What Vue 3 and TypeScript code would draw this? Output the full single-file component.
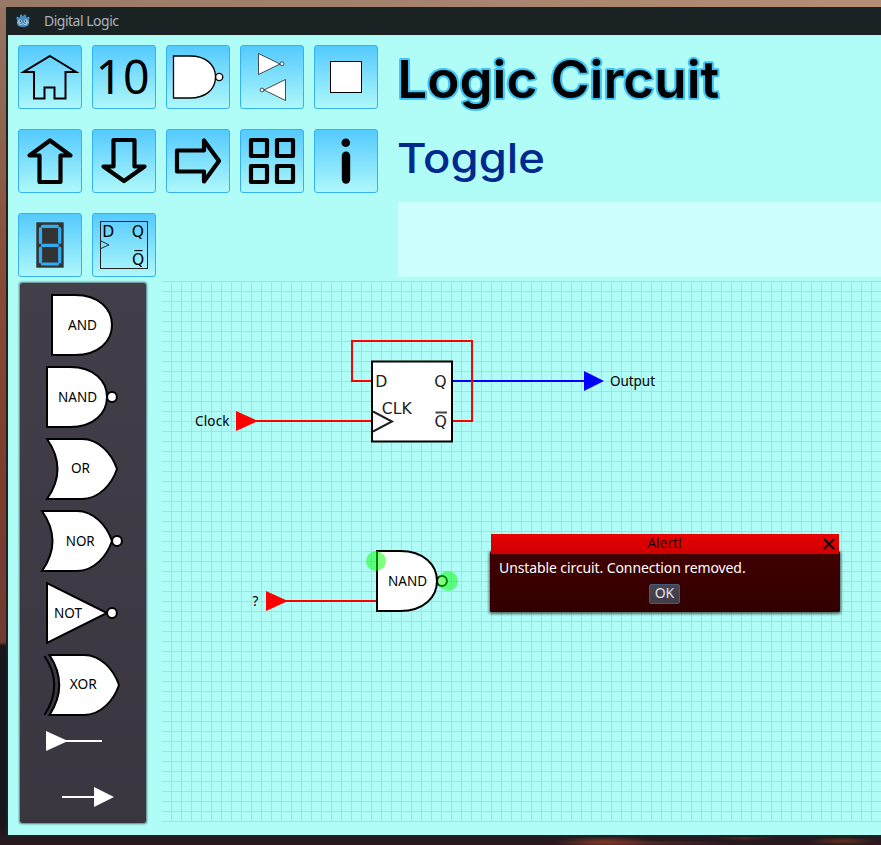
<script setup lang="ts">
import { ref } from 'vue'

interface Gate {
  label: string
  body: string
  textX: number
  textY: number
  textWidth: number
  bubble?: number
  extra?: string
}

const tools: string[] = [
  'home', 'binary', 'gate', 'swap', 'square',
  'up', 'down', 'right', 'grid', 'info',
  'segment', 'flipflop',
]

const gates: Gate[] = [
  { label: 'AND', body: 'M32 6H55C79 6 92 20 92 36S79 66 55 66H32Z', textX: 48, textY: 41, textWidth: 29 },
  { label: 'NAND', body: 'M27 6H50C74 6 87 20 87 36S74 66 50 66H27Z', textX: 38, textY: 41, textWidth: 39, bubble: 92 },
  { label: 'OR', body: 'M27 6H62C79 6 92 21 97 36C92 51 79 66 62 66H27Q48 36 27 6Z', textX: 51, textY: 40, textWidth: 19 },
  { label: 'NOR', body: 'M22 6H57C74 6 87 21 92 36C87 51 74 66 57 66H22Q43 36 22 6Z', textX: 45.7, textY: 41, textWidth: 29, bubble: 97 },
  { label: 'NOT', body: 'M27 6.2L87 36L27 65.800Z', textX: 34, textY: 41, textWidth: 28, bubble: 92 },
  { label: 'XOR', body: 'M29.500 6H64C81 6 94 21 99 36C94 51 81 66 64 66H29.500Q49 36 29.500 6Z', textX: 49.700, textY: 40, textWidth: 27, extra: 'M24.500 7Q44 36 24.500 66' },
]

const alertOpen = ref(true)
</script>

<template>
  <div class="desktop">
    <div class="window">
      <header class="titlebar">
        <svg class="logo" width="16" height="16" viewBox="0 0 16 16">
          <path d="M1 5L2.500 3.500L4 4.500L5 4L5 2L7 1.500L7.500 3H8.500L9 1.500L11 2V4L12 4.500L13.500 3.500L15 5L14 6.500V10.500C14 13 11 14 8 14S2 13 2 10.500V6.500Z" fill="#478cbf" />
          <path d="M2 9.500L4.500 10V11.500H7L7.500 10.500H8.500L9 11.500H11.500V10L14 9.500" fill="none" stroke="#b9d5e8" stroke-width=".8" />
          <circle cx="5" cy="8" r="1.600" fill="#fff" /><circle cx="11" cy="8" r="1.600" fill="#fff" />
          <circle cx="5.200" cy="8" r=".9" fill="#414042" /><circle cx="10.800" cy="8" r=".9" fill="#414042" />
        </svg>
        <span>Digital Logic</span>
      </header>

      <div class="top">
        <nav class="tools">
          <button v-for="tool in tools" :key="tool" class="tool" type="button">
            <svg width="64" height="64" viewBox="0 0 64 64" fill="none" stroke="#000">
              <path v-if="tool === 'home'" d="M32 11L58 27H47.500V53.500H36.500V42.500H26.500V53.500H16V27H5.500Z" stroke-width="2" />
              <text v-else-if="tool === 'binary'" class="glyph" x="3.700" y="48.700" font-size="46.500" textLength="54">10</text>
              <g v-else-if="tool === 'gate'" fill="#fff" stroke-width="1.300">
                <path d="M7.500 11H24C39 11 49.500 19 49.500 32S39 53 24 53H7.500Z" />
                <circle cx="53.200" cy="32" r="3.600" />
              </g>
              <g v-else-if="tool === 'swap'" fill="#fff" stroke="#222" stroke-width=".8">
                <path d="M18.500 8.500L40 19L18.500 29.500Z" /><circle cx="42" cy="18.800" r="1.900" />
                <path d="M45.500 34.500L24 45L45.500 55.500Z" /><circle cx="22" cy="45" r="1.900" />
              </g>
              <rect v-else-if="tool === 'square'" x="16.500" y="16.500" width="31" height="31" fill="#fff" stroke-width="1" />
              <path v-else-if="tool === 'up'" d="M32 11.500L52.500 26.500H42.500V53H21.500V26.500H11.500Z" class="bold" />
              <path v-else-if="tool === 'down'" d="M32 52L52.500 37.500H42.500V11H21.500V37.500H11.500Z" class="bold" />
              <path v-else-if="tool === 'right'" d="M53 32L38 11.500V21.500H11V42.500H38V52.500Z" class="bold" />
              <g v-else-if="tool === 'grid'" class="bold">
                <rect x="11" y="11" width="16" height="16" /><rect x="37" y="11" width="16" height="16" />
                <rect x="11" y="37" width="16" height="16" /><rect x="37" y="37" width="16" height="16" />
              </g>
              <g v-else-if="tool === 'info'" fill="#000" stroke="none">
                <circle cx="31.800" cy="13.800" r="4.300" /><rect x="27.800" y="22.500" width="8.400" height="32.200" rx="4.200" />
              </g>
              <g v-else-if="tool === 'segment'">
                <rect x="18.300" y="9.300" width="27.400" height="45.400" fill="#333" stroke="none" />
                <g stroke="#30adf0" stroke-width="3.200" stroke-linecap="round">
                  <path d="M24.500 13.300H39.500M24.500 32.300H39.500M24.500 51H39.500" />
                  <path d="M22.500 15.500V29.500M41.700 15.500V29.500M22.500 35V49M41.700 35V49" />
                </g>
              </g>
              <g v-else>
                <rect x="8.500" y="8.500" width="47" height="47" stroke="#222" />
                <path d="M9 28L17 31.800L9 35.500" stroke-width=".8" />
                <text class="glyph chip" x="10.300" y="23.700">D</text>
                <text class="glyph chip" x="39.800" y="23.700">Q</text>
                <text class="glyph chip" x="40" y="51.500">Q</text>
                <path d="M42.500 37.600H50.500" stroke-width="1.100" />
              </g>
            </svg>
          </button>
        </nav>

        <div class="heading">
          <svg class="names" width="483" height="167" viewBox="0 0 483 167">
            <text class="title" x="-.8" y="63" font-size="51.500" textLength="322" lengthAdjust="spacingAndGlyphs">Logic Circuit</text>
            <text class="subtitle" x="-1" y="138" font-size="41.500" textLength="148" lengthAdjust="spacingAndGlyphs">Toggle</text>
          </svg>
          <div class="notes"></div>
        </div>
      </div>

      <main class="workspace">
        <aside class="palette">
          <svg v-for="gate in gates" :key="gate.label" width="126" height="72" viewBox="0 0 126 72" fill="#fff" stroke="#000" stroke-width="2">
            <path v-if="gate.extra" :d="gate.extra" fill="none" />
            <path :d="gate.body" />
            <circle v-if="gate.bubble" :cx="gate.bubble" cy="36" r="4.900" />
            <text class="label" :x="gate.textX" :y="gate.textY" :textLength="gate.textWidth" lengthAdjust="spacingAndGlyphs">{{ gate.label }}</text>
          </svg>
          <svg width="126" height="40" viewBox="0 0 126 40" fill="#fff">
            <path d="M26 10L48 20L26 30ZM46 19H82V21H46Z" />
          </svg>
          <svg width="126" height="72" viewBox="0 0 126 72" fill="#fff">
            <path d="M42 35H74V26L94 36L74 46V37H42Z" />
          </svg>
        </aside>

        <section class="canvas">
          <svg class="circuit" width="719" height="542" viewBox="162 281 719 542" fill="none" stroke-width="2">
            <path d="M453 381H586" stroke="#00f" />
            <path d="M584 371L604 381L584 391Z" fill="#00f" />
            <path d="M256 421H372M372 381H352V341H472V421H453" stroke="#f00" />
            <path d="M236 411L258 421L236 431Z" fill="#f00" />
            <rect x="372" y="361.500" width="80" height="80" fill="#fff" stroke="#000" />
            <path d="M373 411.500L392 421.500L373 431.500" stroke="#222" />
            <path d="M435.500 412.500H447" stroke="#444" />
            <text class="pin" x="375.300" y="387.300">D</text>
            <text class="pin" x="434.300" y="387.300">Q</text>
            <text class="pin" x="434.500" y="427.300">Q</text>
            <text class="pin" x="381.700" y="414.200">CLK</text>
            <text class="label" x="195" y="426" textLength="34.500">Clock</text>
            <text class="label" x="610" y="386" textLength="45">Output</text>

            <path d="M286 601H377" stroke="#f00" />
            <path d="M266 591L288 601L266 611Z" fill="#f00" />
            <path d="M377 551H400C424 551 437 565 437 581S424 611 400 611H377Z" fill="#fff" stroke="#000" />
            <circle cx="442" cy="581" r="4.900" fill="#fff" stroke="#000" />
            <circle cx="376" cy="561" r="10" fill="#0f0" fill-opacity=".5" />
            <circle cx="448" cy="581" r="10" fill="#0f0" fill-opacity=".5" />
            <text class="label" x="388" y="586" textLength="39">NAND</text>
            <text class="label" x="252.500" y="606">?</text>
          </svg>

          <div v-if="alertOpen" class="alert">
            <div class="alert-title">
              <span>Alert!</span>
              <svg class="close" width="12" height="12" viewBox="0 0 12 12" @click="alertOpen = false">
                <path d="M1 1L11 11M11 1L1 11" stroke="#100" stroke-width="2" />
              </svg>
            </div>
            <div class="alert-body">
              <p>Unstable circuit. Connection removed.</p>
              <button type="button" class="ok" @click="alertOpen = false">OK</button>
            </div>
          </div>
        </section>
      </main>
    </div>
  </div>
</template>

<style>
body { margin: 0; overflow: hidden; }
</style>

<style scoped>
.desktop {
  box-sizing: border-box;
  width: 881px;
  height: 845px;
  padding: 7px 0 8px 6px;
  overflow: hidden;
  font-family: "Noto Sans", sans-serif;
  background:
    radial-gradient(ellipse 50px 6px at 605px 842px, #7c3828, transparent),
    radial-gradient(ellipse 90px 3px at 640px 843px, #552a26, transparent),
    radial-gradient(ellipse 30px 3px at 745px 838px, #50251f, transparent),
    radial-gradient(ellipse 35px 4px at 842px 841px, #62301f, transparent),
    linear-gradient(90deg, #967966, #b48e74) 0 0 / 100% 7px no-repeat,
    linear-gradient(#967561 0, #8d6650 120px, #884e3a 250px, #7c3e2d 450px, #713a30 642px, #18151b 646px, #17141b 820px, #2b1a20 845px);
}
.window {
  box-sizing: border-box;
  width: 875px;
  height: 830px;
  border-left: 2px solid #1b2224;
  border-bottom: 2px solid #1b2224;
  background: #b0fdf8;
}
.titlebar {
  display: flex;
  align-items: center;
  gap: 13px;
  height: 28px;
  margin-left: -2px;
  padding-left: 9px;
  background: #1b2224;
  color: #a9b1bd;
  font-size: 14px;
}
.titlebar span { margin-top: -2px; letter-spacing: -.5px; }
.top {
  display: flex;
  gap: 20px;
  height: 246px;
  padding-left: 10px;
}
.tools {
  display: grid;
  flex: none;
  grid-template-columns: repeat(5, 64px);
  grid-auto-rows: 64px;
  gap: 20px 10px;
  padding-top: 10px;
}
.tool {
  box-sizing: border-box;
  padding: 0;
  border: 1px solid #35b1f1;
  border-radius: 3px;
  background: linear-gradient(#54caff, #aef8fa);
}
.tool svg { display: block; margin: -1px; }
.bold { stroke-width: 4.200; stroke-linejoin: round; }
.glyph { font-family: "Noto Sans", sans-serif; fill: #000; stroke: none; }
.chip { font: 15.500px "DejaVu Sans", sans-serif; }
.heading { flex: none; width: 483px; }
.names { display: block; overflow: visible; }
.title {
  font-family: Inter, sans-serif;
  font-weight: 600;
  fill: #000;
  stroke: #3fc4f8;
  stroke-width: 4px;
  stroke-linejoin: round;
  paint-order: stroke;
}
.subtitle { font-family: Inter, sans-serif; font-weight: 500; fill: #00288f; }
.notes { height: 75px; background: #ceffff; }
.workspace {
  display: flex;
  align-items: flex-start;
  gap: 16px;
  padding-left: 12px;
}
.palette {
  box-sizing: border-box;
  flex: none;
  width: 126px;
  height: 540px;
  margin-top: 2px;
  padding-top: 6px;
  border-radius: 2px;
  background: linear-gradient(#423f4a, #393640);
  box-shadow: 0 0 2px 1px rgba(40, 55, 62, .65);
}
.palette svg { display: block; }
.label { font: 13.5px "Noto Sans", sans-serif; fill: #000; stroke: none; }
.pin { font: 15.700px "DejaVu Sans", sans-serif; fill: #222; stroke: none; }
.canvas {
  position: relative;
  flex: none;
  width: 719px;
  height: 541px;
  background:
    linear-gradient(90deg, #9ae5e0 1px, transparent 1px) 9px 0 / 10px 10px,
    linear-gradient(#9ae5e0 1px, transparent 1px) 0 0 / 10px 10px;
}
.circuit { display: block; }
.alert {
  position: absolute;
  left: 328px;
  top: 253px;
  width: 350px;
  font-size: 14px;
}
.alert::before {
  content: "";
  position: absolute;
  inset: 17px 0 0;
  border-radius: 2px;
  background: #3a0000;
  box-shadow: 0 1px 3px 1px rgba(10, 0, 0, .6);
}
.alert-title {
  position: relative;
  display: flex;
  align-items: center;
  justify-content: center;
  height: 20px;
  margin: 0 1px;
  background: linear-gradient(#e80000, #ce0000);
  color: #200;
}
.alert-title span { margin: -3px 1px 0 0; line-height: 19px; letter-spacing: -.1px; }
.close { position: absolute; right: 4px; top: 4px; }
.alert-body {
  position: relative;
  display: flex;
  flex-direction: column;
  align-items: center;
  height: 58px;
  border-radius: 0 0 2px 2px;
  background: linear-gradient(#400000, #320000);
  color: #fff;
}
.alert-body p {
  align-self: flex-start;
  margin: 4px 0 6px 9px;
  line-height: 20px;
  letter-spacing: -.1px;
  white-space: nowrap;
}
.ok {
  box-sizing: border-box;
  width: 31px;
  height: 20px;
  margin-right: 1px;
  padding: 0 0 2px;
  border: 1px solid #465b7c;
  border-radius: 2px;
  background: linear-gradient(#484551, #403d48);
  color: #e2e2e6;
  font: 14px/16px "Noto Sans", sans-serif;
}
</style>
